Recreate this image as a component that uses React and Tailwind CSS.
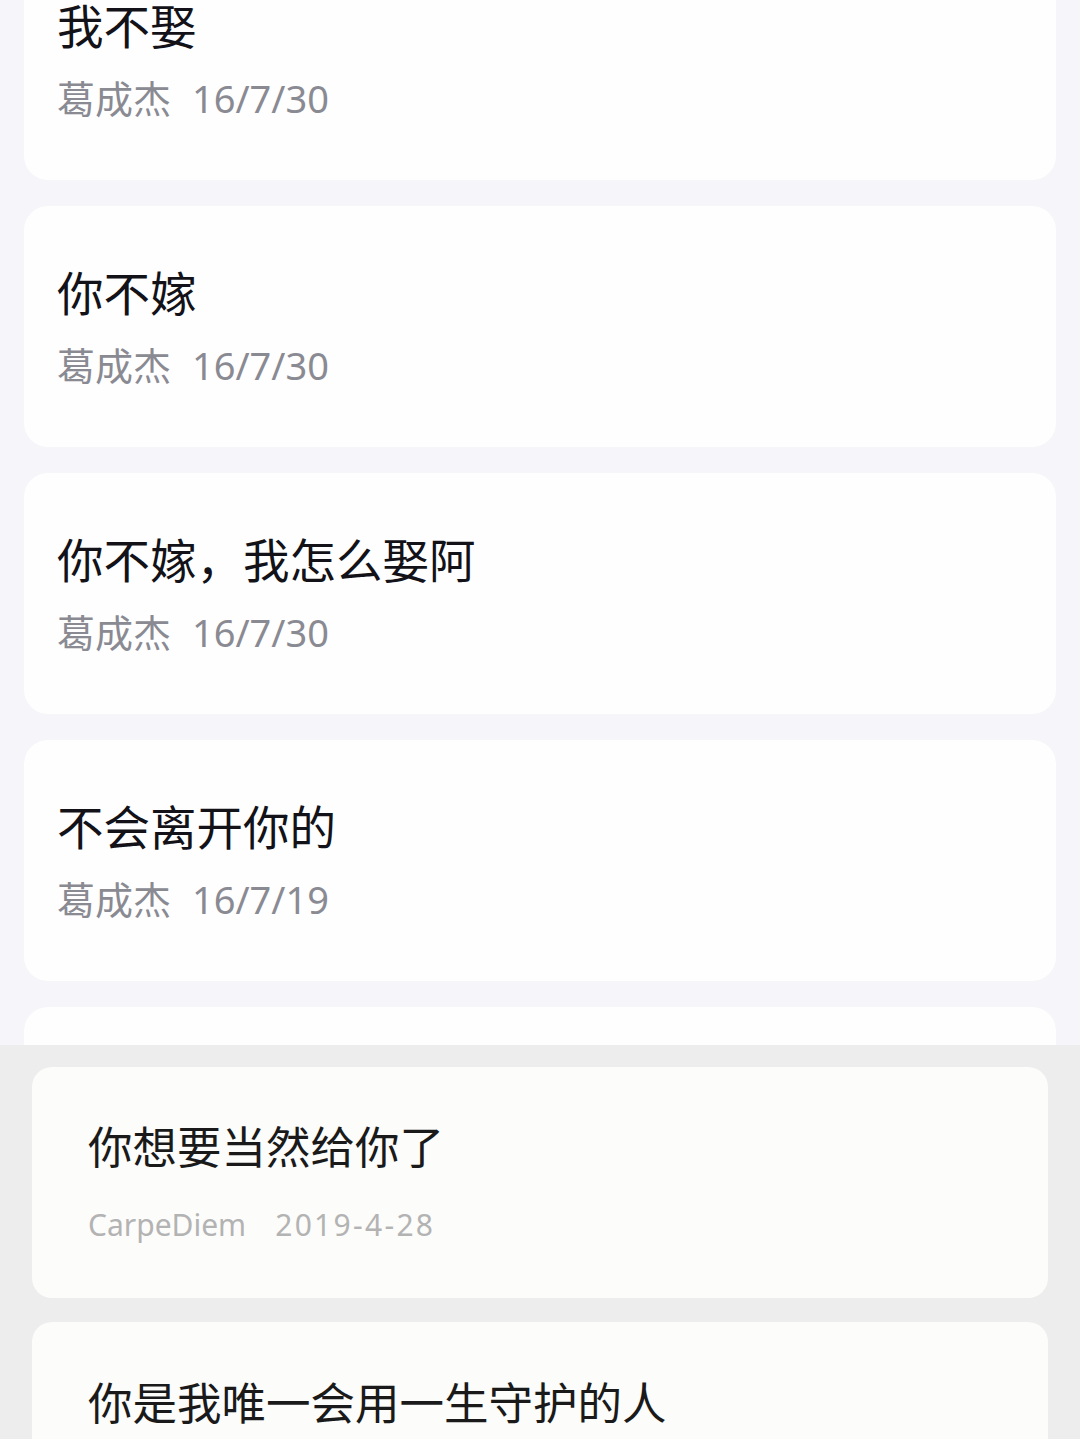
import React from "react";

const top = [
  { t: "我不娶", d: "16/7/30" },
  { t: "你不嫁", d: "16/7/30" },
  { t: "你不嫁，我怎么娶阿", d: "16/7/30" },
  { t: "不会离开你的", d: "16/7/19" },
];

const font = { fontFamily: '"Noto Sans", "Noto Sans CJK SC", sans-serif' };

export default function App() {
  return (
    <div className="w-[1080px] h-[1439px] overflow-hidden" style={font}>
      <div className="h-[1045px] overflow-hidden bg-[#f5f5fa] px-[24px] flex flex-col gap-[26px]">
        {top.map((c, i) => (
          <div
            key={i}
            className={`shrink-0 h-[241px] rounded-[24px] bg-[#fefefe] pl-[33px] pt-[59px] ${i === 0 ? "-mt-[61px]" : ""}`}
          >
            <div className="text-[46.5px] leading-[56px] text-[#121218]">{c.t}</div>
            <div className="mt-[21px] text-[38px] leading-[46px] text-[#8a8a93]">
              葛成杰<span className="ml-[21px]">{c.d}</span>
            </div>
          </div>
        ))}
        <div className="shrink-0 h-[241px] rounded-[24px] bg-[#fefefe]"></div>
      </div>
      <div className="h-[394px] bg-[#ededed] px-[32px] pt-[22px] flex flex-col gap-[24px] overflow-hidden">
        <div className="shrink-0 h-[231px] rounded-[20px] bg-[#fcfcfa] pl-[56px] pt-[53px]">
          <div className="text-[44.5px] leading-[54px] text-[#1a1a1a]">你想要当然给你了</div>
          <div className="mt-[31px] text-[30px] leading-[40px] text-[#b3b3b3]">
            CarpeDiem<span className="ml-[29px] tracking-[2.3px]">2019-4-28</span>
          </div>
        </div>
        <div className="shrink-0 h-[231px] rounded-[20px] bg-[#fcfcfa] pl-[56px] pt-[54px]">
          <div className="text-[44.5px] leading-[54px] text-[#1a1a1a]">你是我唯一会用一生守护的人</div>
        </div>
      </div>
    </div>
  );
}
